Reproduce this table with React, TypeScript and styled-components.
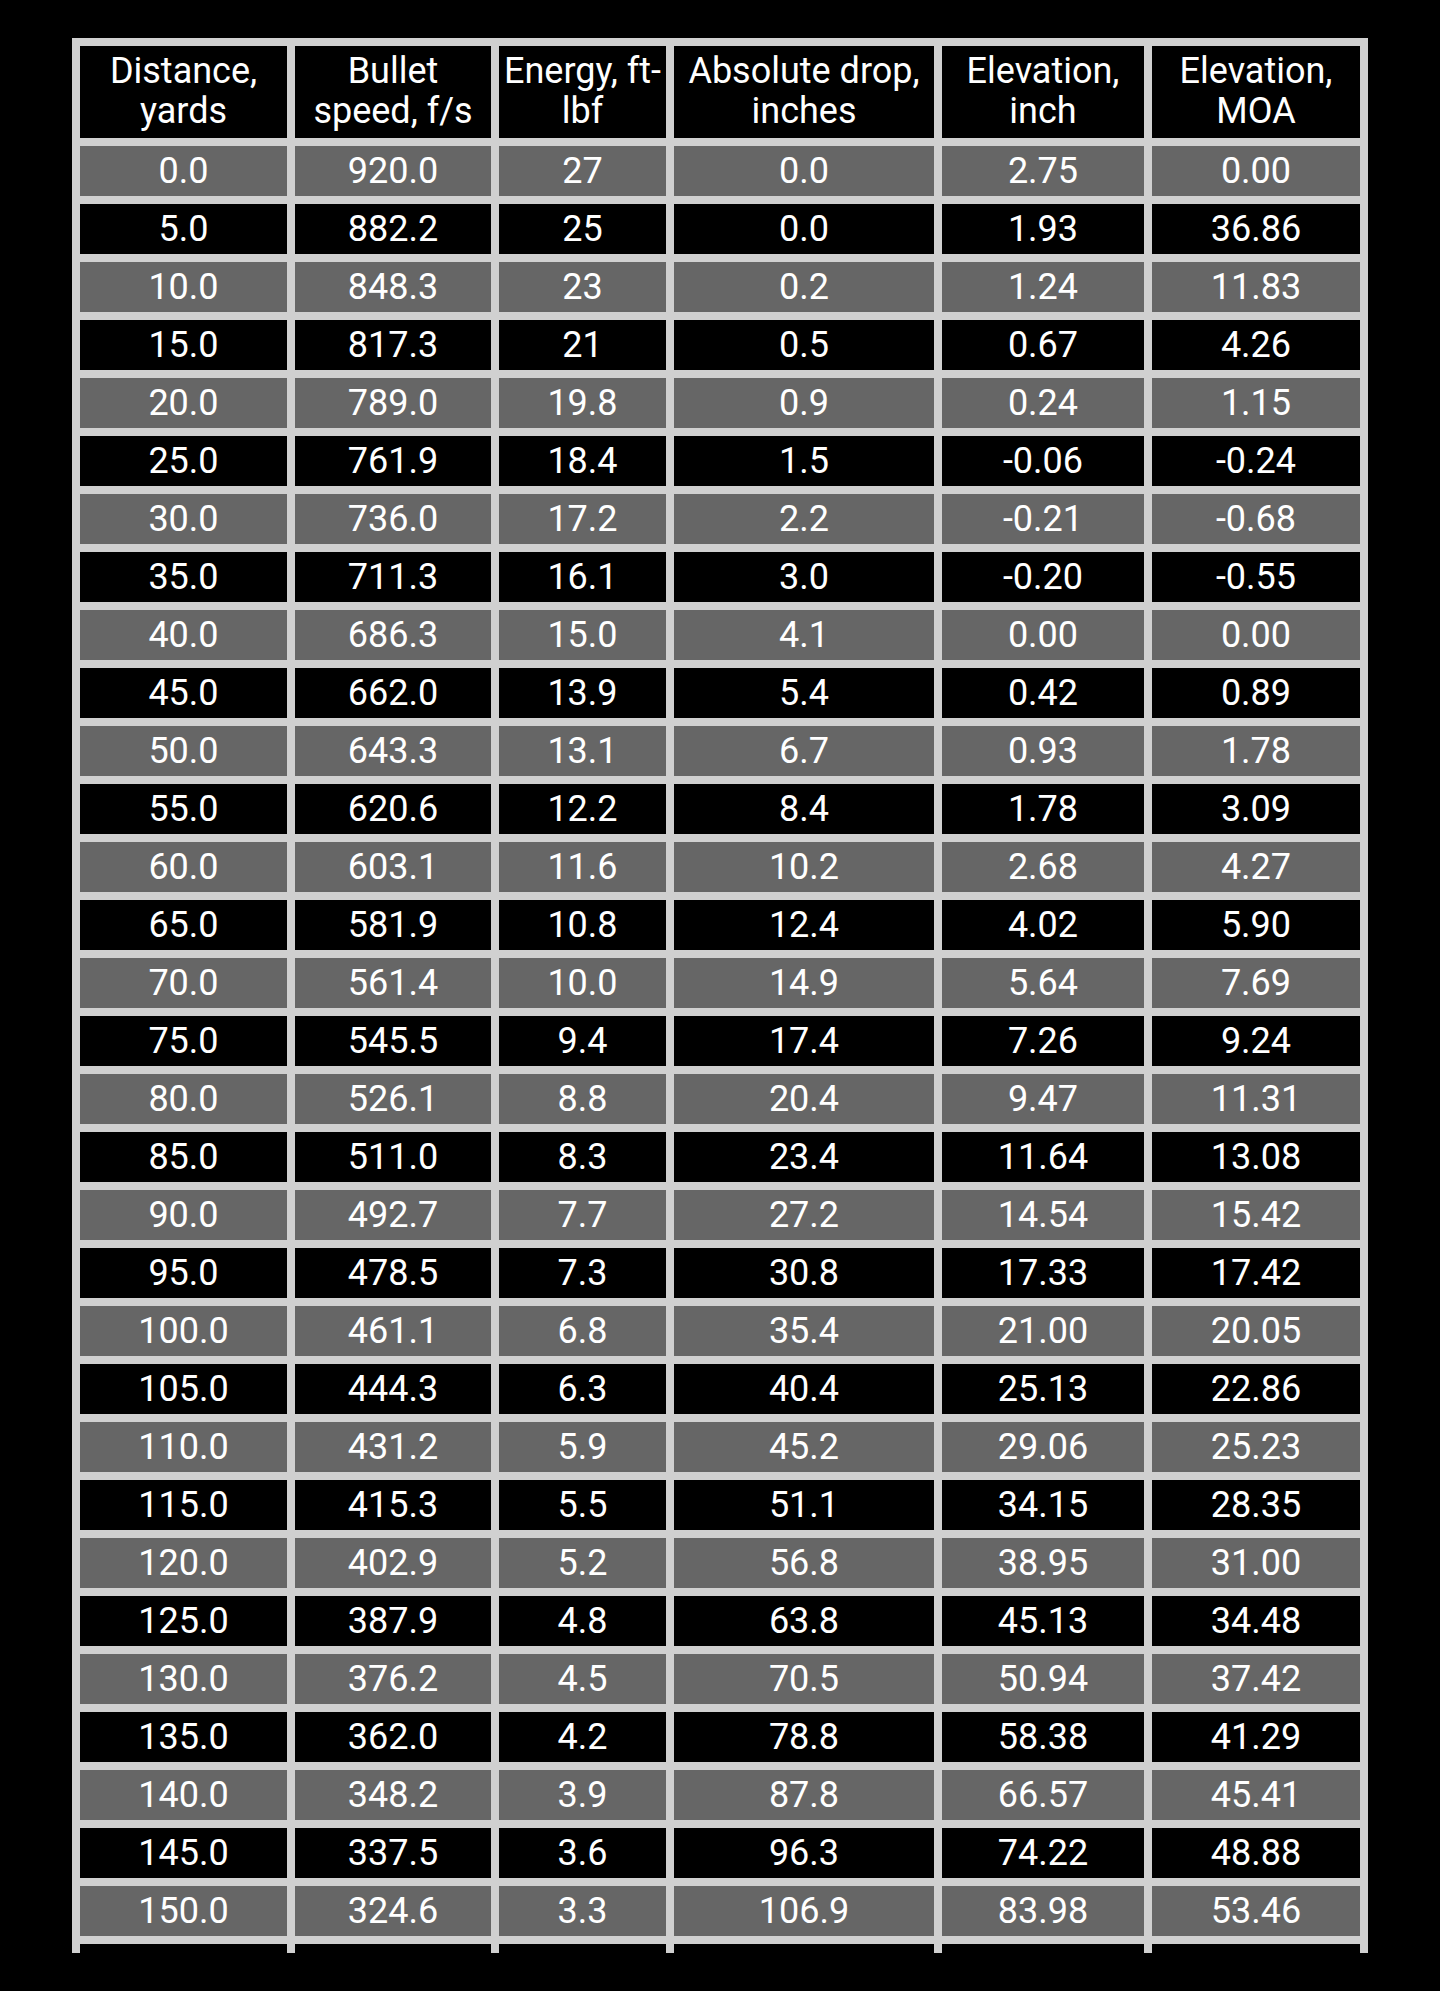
import styled, { createGlobalStyle } from 'styled-components';

const GlobalStyle = createGlobalStyle`
  html, body {
    margin: 0;
    padding: 0;
    background: #000;
  }
  body {
    font-family: Roboto, 'Noto Sans', 'Liberation Sans', sans-serif;
    color: #fff;
  }
`;

const Page = styled.main`
  min-height: 1991px;
  padding: 38px 72px 0;
  box-sizing: border-box;
  background: #000;
`;

// the table runs on past the bottom of the screen
const Clip = styled.div`
  height: 1915px;
  overflow: hidden;
`;

const Table = styled.table`
  width: 1296px;
  table-layout: fixed;
  border-collapse: separate;
  border-spacing: 8px;
  background: #d0d0d0;
  font-size: 36px;
  line-height: 40px;
`;

const HeadCell = styled.th<{ $w: number }>`
  width: ${(p) => p.$w}px;
  height: 92px;
  padding: 0 0 2px;
  box-sizing: border-box;
  background: #000;
  color: #fff;
  font-weight: 400;
  text-align: center;
  vertical-align: middle;
`;

const Cell = styled.td<{ $grey: boolean }>`
  height: 50px;
  padding: 0;
  background: ${(p) => (p.$grey ? '#666666' : '#000')};
  color: #fff;
  text-align: center;
  vertical-align: middle;
  white-space: nowrap;
`;

const columns = [
  { title: 'Distance, yards', w: 207 },
  { title: 'Bullet speed, f/s', w: 196 },
  { title: 'Energy, ft-lbf', w: 167 },
  { title: 'Absolute drop, inches', w: 260 },
  { title: 'Elevation, inch', w: 202 },
  { title: 'Elevation, MOA', w: 208 },
];

const rows = [
  ['0.0', '920.0', '27', '0.0', '2.75', '0.00'],
  ['5.0', '882.2', '25', '0.0', '1.93', '36.86'],
  ['10.0', '848.3', '23', '0.2', '1.24', '11.83'],
  ['15.0', '817.3', '21', '0.5', '0.67', '4.26'],
  ['20.0', '789.0', '19.8', '0.9', '0.24', '1.15'],
  ['25.0', '761.9', '18.4', '1.5', '-0.06', '-0.24'],
  ['30.0', '736.0', '17.2', '2.2', '-0.21', '-0.68'],
  ['35.0', '711.3', '16.1', '3.0', '-0.20', '-0.55'],
  ['40.0', '686.3', '15.0', '4.1', '0.00', '0.00'],
  ['45.0', '662.0', '13.9', '5.4', '0.42', '0.89'],
  ['50.0', '643.3', '13.1', '6.7', '0.93', '1.78'],
  ['55.0', '620.6', '12.2', '8.4', '1.78', '3.09'],
  ['60.0', '603.1', '11.6', '10.2', '2.68', '4.27'],
  ['65.0', '581.9', '10.8', '12.4', '4.02', '5.90'],
  ['70.0', '561.4', '10.0', '14.9', '5.64', '7.69'],
  ['75.0', '545.5', '9.4', '17.4', '7.26', '9.24'],
  ['80.0', '526.1', '8.8', '20.4', '9.47', '11.31'],
  ['85.0', '511.0', '8.3', '23.4', '11.64', '13.08'],
  ['90.0', '492.7', '7.7', '27.2', '14.54', '15.42'],
  ['95.0', '478.5', '7.3', '30.8', '17.33', '17.42'],
  ['100.0', '461.1', '6.8', '35.4', '21.00', '20.05'],
  ['105.0', '444.3', '6.3', '40.4', '25.13', '22.86'],
  ['110.0', '431.2', '5.9', '45.2', '29.06', '25.23'],
  ['115.0', '415.3', '5.5', '51.1', '34.15', '28.35'],
  ['120.0', '402.9', '5.2', '56.8', '38.95', '31.00'],
  ['125.0', '387.9', '4.8', '63.8', '45.13', '34.48'],
  ['130.0', '376.2', '4.5', '70.5', '50.94', '37.42'],
  ['135.0', '362.0', '4.2', '78.8', '58.38', '41.29'],
  ['140.0', '348.2', '3.9', '87.8', '66.57', '45.41'],
  ['145.0', '337.5', '3.6', '96.3', '74.22', '48.88'],
  ['150.0', '324.6', '3.3', '106.9', '83.98', '53.46'],
  ['', '', '', '', '', ''],
];

const App = () => {
  return (
    <>
      <GlobalStyle />
      <Page>
        <Clip>
          <Table>
            <thead>
              <tr>
                {columns.map((c) => (
                  <HeadCell key={c.title} $w={c.w}>
                    {c.title}
                  </HeadCell>
                ))}
              </tr>
            </thead>
            <tbody>
              {rows.map((r, i) => (
                <tr key={i}>
                  {r.map((v, j) => (
                    <Cell key={j} $grey={i % 2 === 0}>
                      {v}
                    </Cell>
                  ))}
                </tr>
              ))}
            </tbody>
          </Table>
        </Clip>
      </Page>
    </>
  );
};

export default App;
